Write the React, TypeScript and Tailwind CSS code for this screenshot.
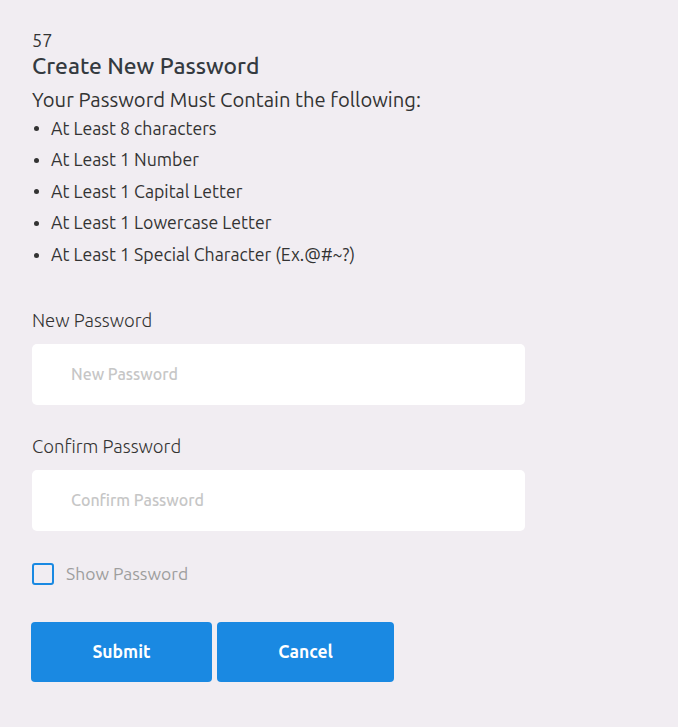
import React from "react";

export default function App() {
  const items = [
    "At Least 8 characters",
    "At Least 1 Number",
    "At Least 1 Capital Letter",
    "At Least 1 Lowercase Letter",
    "At Least 1 Special Character (Ex.@#~?)",
  ];
  return (
    <div
      className="min-h-[727px] w-full bg-[#f1edf2] text-[#333333] pl-[32px] pt-[29px]"
      style={{ fontFamily: "Ubuntu, 'Open Sans', sans-serif" }}
    >
      <div className="text-[18px] leading-[22px]">57</div>
      <h1 className="mt-[1px] text-[22.8px] font-medium leading-[28px] text-[#343a40]">Create New Password</h1>
      <p className="mt-[8px] text-[20.2px] leading-[24px]">Your Password Must Contain the following:</p>
      <ul className="mt-[1px] flex flex-col">
        {items.map((t) => (
          <li key={t} className="flex items-center h-[31.6px] text-[17.7px]">
            <span className="w-[5px] h-[5px] rounded-full bg-[#333333] ml-[2px] mr-[12px]" />
            {t}
          </li>
        ))}
      </ul>
      <div className="mt-[37px] w-[493px]">
        <label className="block text-[18.5px] font-light leading-[24px]">New Password</label>
        <div className="mt-[12px] h-[61px] bg-white rounded-[5px] flex items-center pl-[39px]">
          <span className="text-[16px] font-medium text-[#c6c6c6]">New Password</span>
        </div>
        <label className="block mt-[29px] text-[18.5px] font-light leading-[24px]">Confirm Password</label>
        <div className="mt-[12px] h-[61px] bg-white rounded-[5px] flex items-center pl-[39px]">
          <span className="text-[16px] font-medium text-[#c6c6c6]">Confirm Password</span>
        </div>
        <div className="mt-[30px] flex items-center">
          <span className="w-[22px] h-[22px] border-2 border-[#1a89e2] rounded-[3px]" />
          <span className="ml-[12px] text-[17.5px] text-[#9e9e9e]">Show Password</span>
        </div>
        <div className="mt-[35px] flex gap-[5px] -ml-[1px]">
          <button className="w-[181px] h-[60px] bg-[#1a89e2] rounded-[4px] text-white text-[17.5px] font-bold">Submit</button>
          <button className="w-[177px] h-[60px] bg-[#1a89e2] rounded-[4px] text-white text-[17.5px] font-bold">Cancel</button>
        </div>
      </div>
    </div>
  );
}
